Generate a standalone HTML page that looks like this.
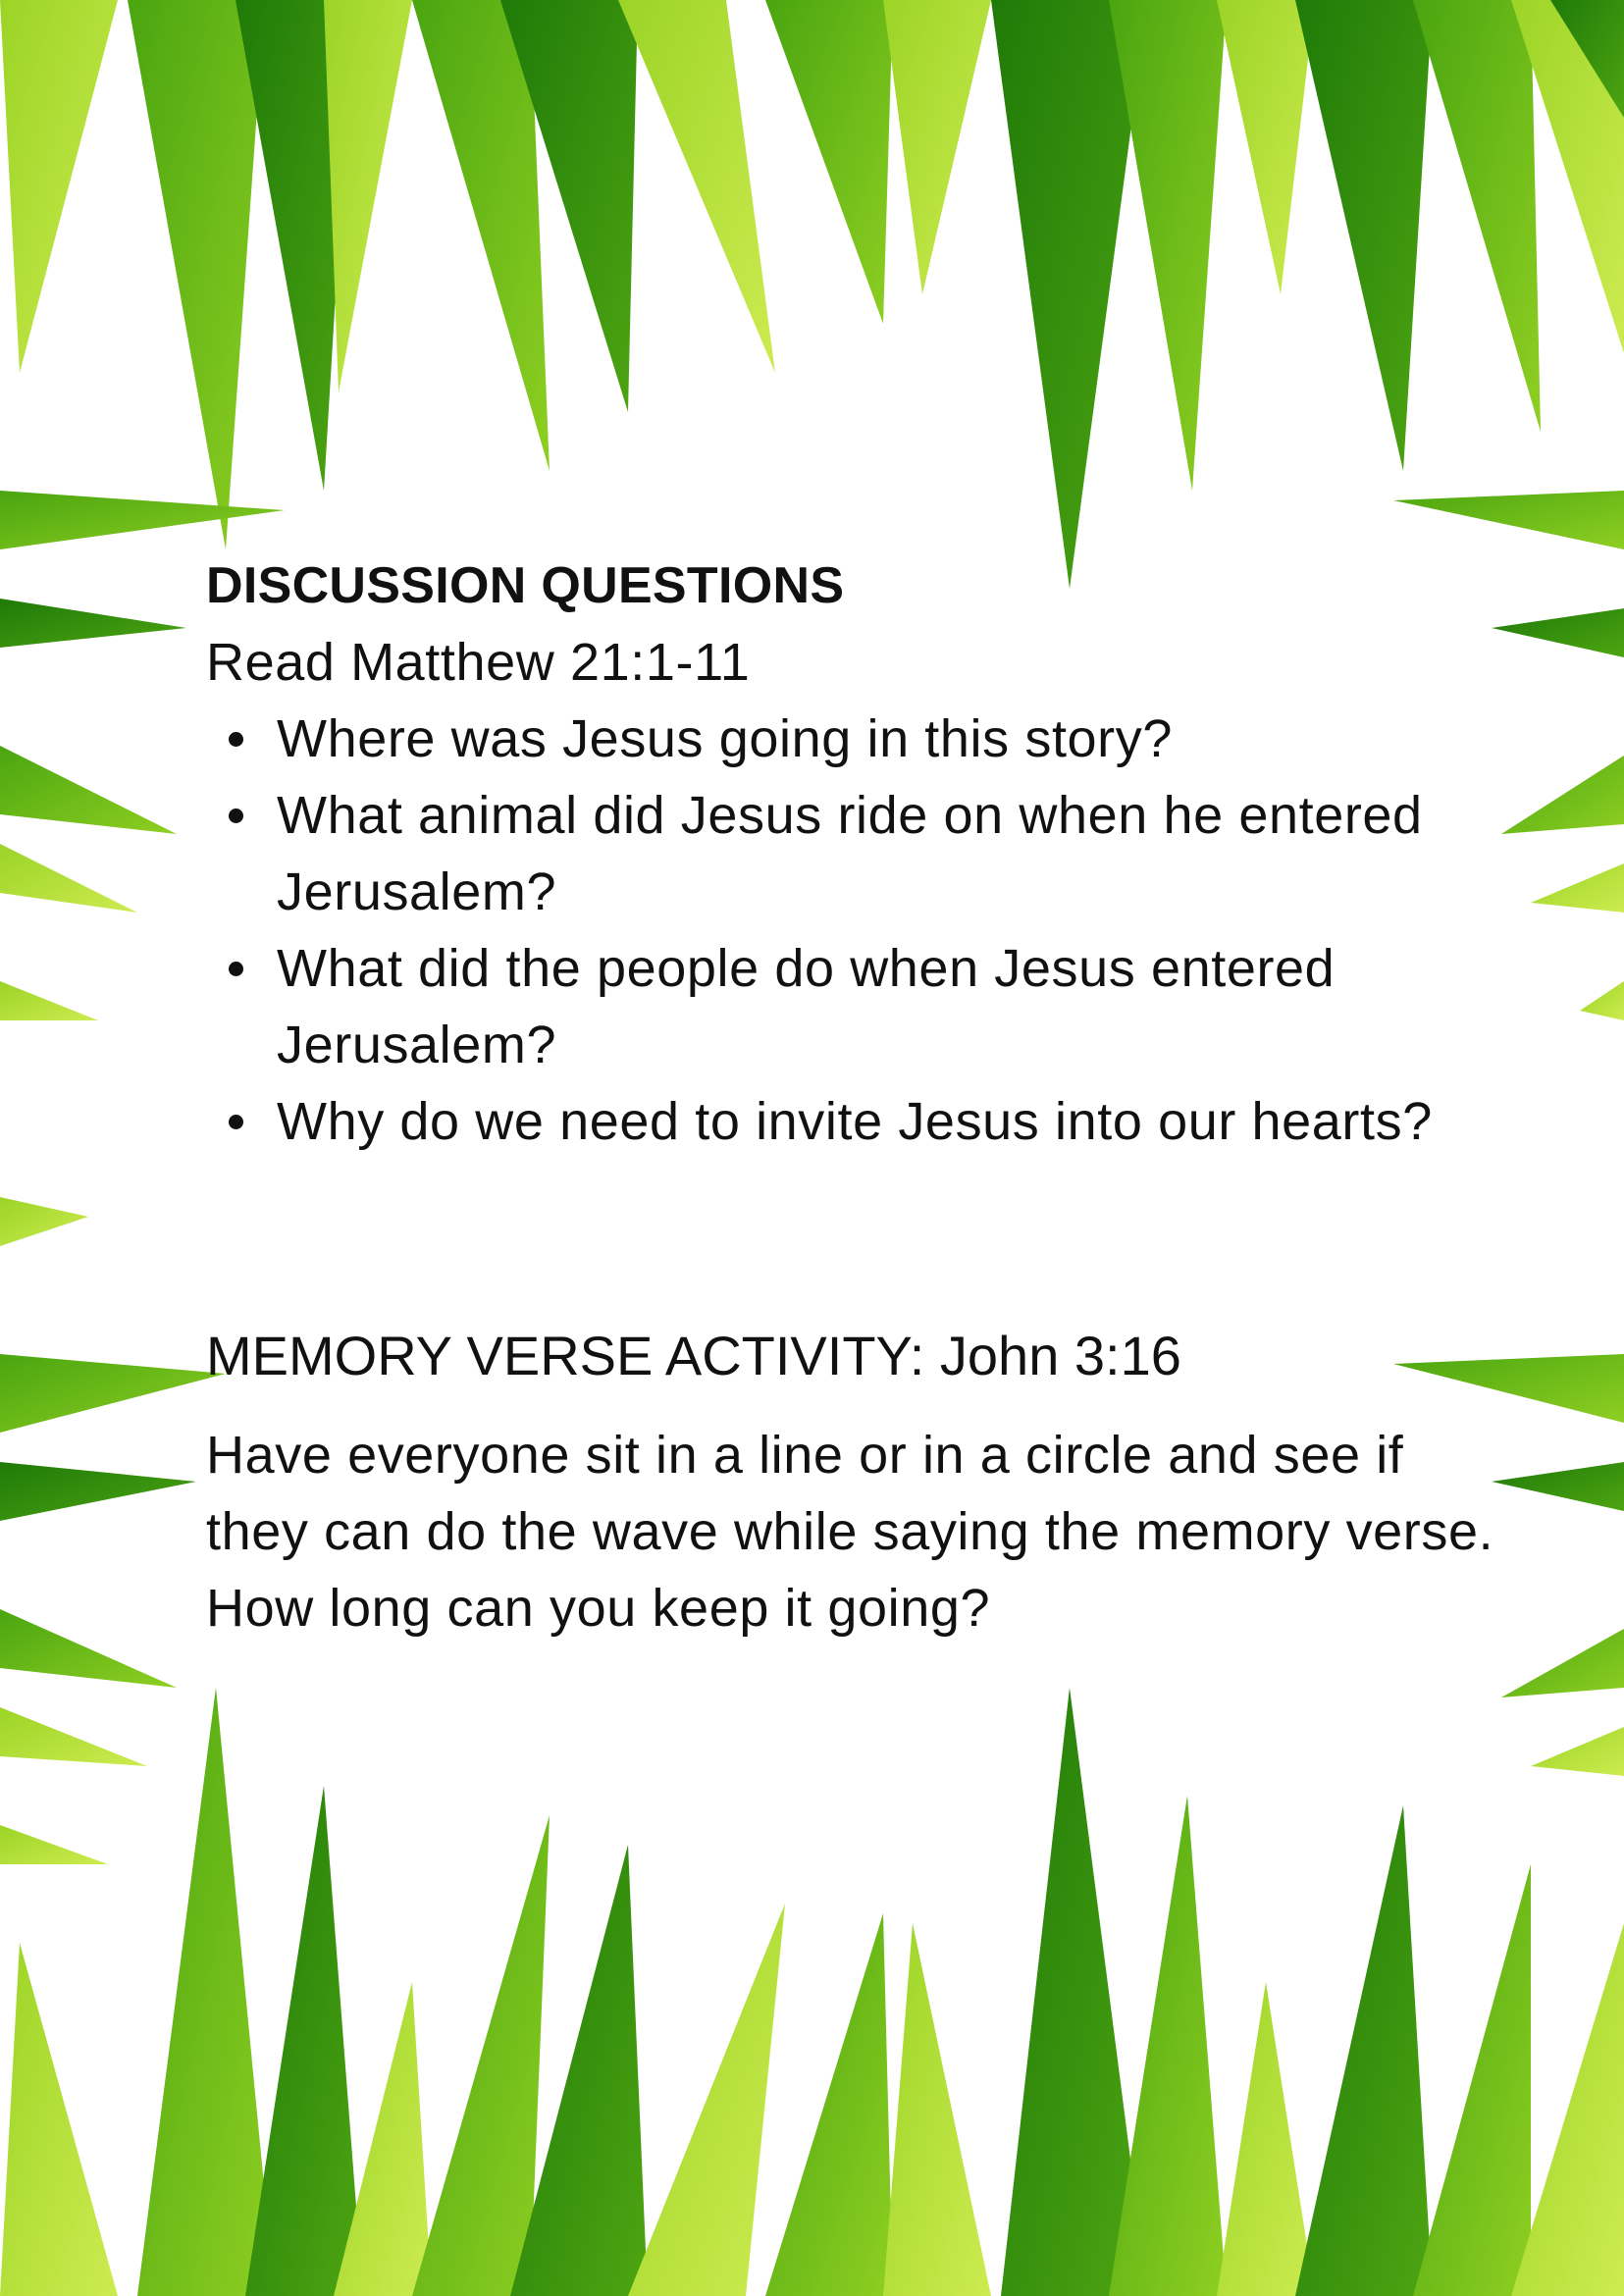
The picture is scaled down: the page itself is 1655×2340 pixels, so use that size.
<!DOCTYPE html>
<html><head><meta charset="utf-8">
<style>
html,body{margin:0;padding:0;background:#fff;}
body{width:1655px;height:2340px;position:relative;overflow:hidden;font-family:"Liberation Sans",sans-serif;}
svg{position:absolute;left:0;top:0;}
.t{position:absolute;left:210px;color:#111;font-size:54px;font-weight:300;line-height:78px;letter-spacing:0.6px;white-space:nowrap;}
.h{font-weight:bold;font-size:52px;letter-spacing:0.3px;}
ul{margin:0;padding:0;list-style:none;}
li{position:relative;padding-left:72px;}
li:before{content:"";position:absolute;left:23px;top:32px;width:15px;height:15px;border-radius:50%;background:#111;}
</style></head><body>
<svg width="1655" height="2340" viewBox="0 0 1655 2340">
<defs>
<linearGradient id="d" x1="0" y1="0" x2="1" y2="1"><stop offset="0" stop-color="#1f7a08"/><stop offset="1" stop-color="#4ea512"/></linearGradient>
<linearGradient id="m" x1="0" y1="0" x2="1" y2="1"><stop offset="0" stop-color="#4aa510"/><stop offset="1" stop-color="#8fcf22"/></linearGradient>
<linearGradient id="l" x1="0" y1="0" x2="1" y2="1"><stop offset="0" stop-color="#9bd426"/><stop offset="1" stop-color="#cdeb50"/></linearGradient>
</defs>
<g>
<polygon points="0,0 120,0 20,380" fill="url(#l)"/>
<polygon points="130,0 270,0 230,560" fill="url(#m)"/>
<polygon points="240,0 360,0 330,500" fill="url(#d)"/>
<polygon points="330,0 420,0 345,400" fill="url(#l)"/>
<polygon points="420,0 540,0 560,480" fill="url(#m)"/>
<polygon points="510,0 650,0 640,420" fill="url(#d)"/>
<polygon points="630,0 740,0 790,380" fill="url(#l)"/>
<polygon points="780,0 910,0 900,330" fill="url(#m)"/>
<polygon points="900,0 1010,0 940,300" fill="url(#l)"/>
<polygon points="1010,0 1170,0 1090,600" fill="url(#d)"/>
<polygon points="1130,0 1250,0 1215,500" fill="url(#m)"/>
<polygon points="1240,0 1340,0 1305,300" fill="url(#l)"/>
<polygon points="1320,0 1460,0 1430,480" fill="url(#d)"/>
<polygon points="1440,0 1560,0 1570,440" fill="url(#m)"/>
<polygon points="1540,0 1655,0 1655,360" fill="url(#l)"/>
<polygon points="1580,0 1655,0 1655,120" fill="url(#d)"/>
</g>
<g>
<polygon points="0,2340 120,2340 20,1980" fill="url(#l)"/>
<polygon points="140,2340 280,2340 220,1720" fill="url(#m)"/>
<polygon points="250,2340 370,2340 330,1820" fill="url(#d)"/>
<polygon points="340,2340 440,2340 420,2020" fill="url(#l)"/>
<polygon points="420,2340 540,2340 560,1850" fill="url(#m)"/>
<polygon points="520,2340 660,2340 640,1880" fill="url(#d)"/>
<polygon points="640,2340 760,2340 800,1940" fill="url(#l)"/>
<polygon points="780,2340 910,2340 900,1950" fill="url(#m)"/>
<polygon points="900,2340 1010,2340 930,1960" fill="url(#l)"/>
<polygon points="1020,2340 1170,2340 1090,1720" fill="url(#d)"/>
<polygon points="1130,2340 1250,2340 1210,1830" fill="url(#m)"/>
<polygon points="1240,2340 1340,2340 1290,2020" fill="url(#l)"/>
<polygon points="1320,2340 1460,2340 1430,1840" fill="url(#d)"/>
<polygon points="1440,2340 1560,2340 1560,1900" fill="url(#m)"/>
<polygon points="1540,2340 1655,2340 1655,1960" fill="url(#l)"/>
</g>
<g>
<polygon points="0,500 0,560 290,520" fill="url(#m)"/>
<polygon points="0,610 0,660 190,640" fill="url(#d)"/>
<polygon points="0,760 0,830 180,850" fill="url(#m)"/>
<polygon points="0,860 0,910 140,930" fill="url(#l)"/>
<polygon points="0,1000 0,1040 100,1040" fill="url(#l)"/>
<polygon points="0,1220 0,1270 90,1240" fill="url(#l)"/>
<polygon points="0,1380 0,1460 230,1400" fill="url(#m)"/>
<polygon points="0,1490 0,1550 200,1510" fill="url(#d)"/>
<polygon points="0,1640 0,1700 180,1720" fill="url(#m)"/>
<polygon points="0,1740 0,1790 150,1800" fill="url(#l)"/>
<polygon points="0,1860 0,1900 110,1900" fill="url(#l)"/>
<polygon points="1655,500 1655,560 1420,510" fill="url(#m)"/>
<polygon points="1655,620 1655,670 1520,640" fill="url(#d)"/>
<polygon points="1655,770 1655,840 1530,850" fill="url(#m)"/>
<polygon points="1655,880 1655,930 1560,920" fill="url(#l)"/>
<polygon points="1655,1000 1655,1040 1610,1030" fill="url(#l)"/>
<polygon points="1655,1380 1655,1450 1420,1390" fill="url(#m)"/>
<polygon points="1655,1490 1655,1540 1520,1510" fill="url(#d)"/>
<polygon points="1655,1660 1655,1720 1530,1730" fill="url(#m)"/>
<polygon points="1655,1760 1655,1810 1560,1800" fill="url(#l)"/>
</g>
</svg>
<div class="t h" style="top:558px;">DISCUSSION QUESTIONS</div>
<div class="t" style="top:636px;">Read Matthew 21:1-11
<ul>
<li>Where was Jesus going in this story?</li>
<li>What animal did Jesus ride on when he entered<br>Jerusalem?</li>
<li>What did the people do when Jesus entered<br>Jerusalem?</li>
<li>Why do we need to invite Jesus into our hearts?</li>
</ul></div>
<div class="t" style="top:1343px;font-size:56px;letter-spacing:0;">MEMORY VERSE ACTIVITY: John 3:16</div>
<div class="t" style="top:1444px;">Have everyone sit in a line or in a circle and see if<br>they can do the wave while saying the memory verse.<br>How long can you keep it going?</div>
</body></html>
